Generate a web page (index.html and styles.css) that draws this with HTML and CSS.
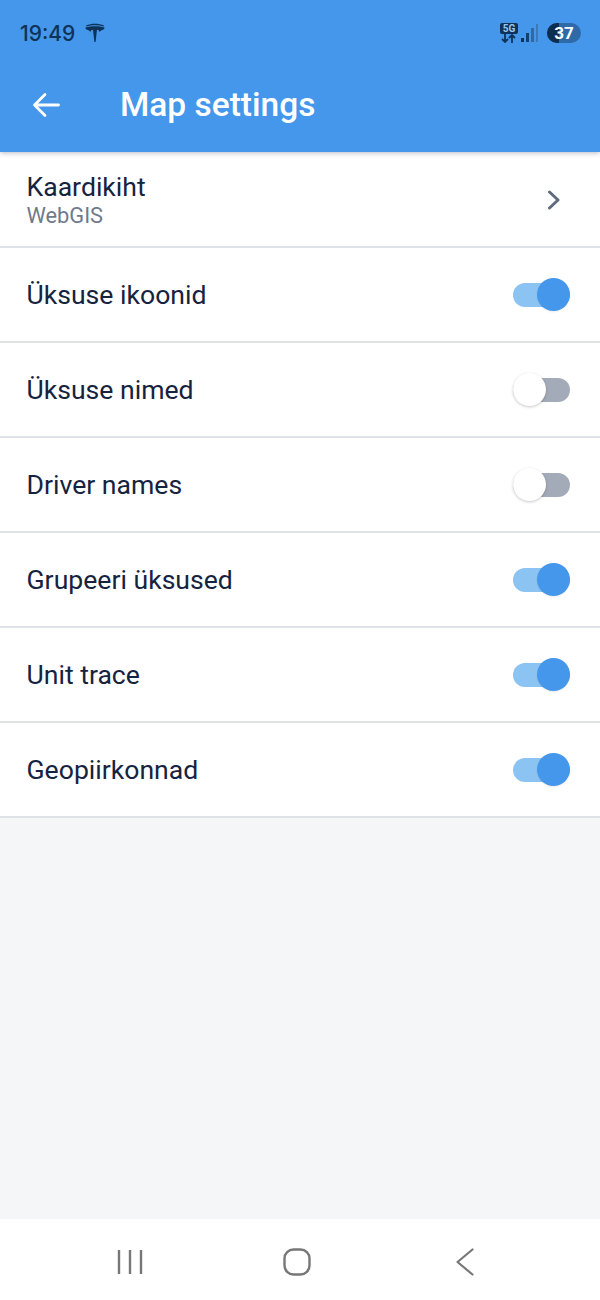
FILE: index.html
```html
<!DOCTYPE html>
<html lang="et">
<head>
<meta charset="utf-8">
<title>Map settings</title>
<link rel="stylesheet" href="styles.css">
</head>
<body>
<div class="screen">
  <header class="header">
    <div class="status">
      <div class="status-left">
        <span class="time">19:49</span>
        <svg class="tesla" viewBox="0 0 20 20" width="20" height="20"><path d="M1 2.4 C6.5 0.2 13.5 0.2 19 2.4 L18.6 3.4 C13.5 1.8 6.5 1.8 1.4 3.4 Z M0.6 4.6 C6 2.9 14 2.9 19.4 4.6 C19.6 5.3 19.4 5.8 19 6.2 C17.4 6.7 15.6 7.6 14.6 9 C14.2 7.4 13.4 6.9 12 6.7 L10.6 19 H9.4 L8 6.7 C6.6 6.9 5.8 7.4 5.4 9 C4.4 7.6 2.6 6.7 1 6.2 C0.6 5.8 0.4 5.3 0.6 4.6 Z" fill="#0f3358"/></svg>
      </div>
      <div class="status-right">
        <div class="net">
          <span class="net-badge">5G</span>
          <svg class="net-arrows" viewBox="0 0 18 9" width="18" height="9"><path d="M5 0 V8 M2 5 L5 8 L8 5 M12 9 V1 M9 4 L12 1 L15 4" fill="none" stroke="#0f3358" stroke-width="1.8"/></svg>
        </div>
        <svg class="signal" viewBox="0 0 18 20" width="18" height="20">
          <rect x="0" y="15" width="3" height="4" fill="#0f3358"/>
          <rect x="5" y="10" width="3" height="9" fill="#15416f"/>
          <rect x="10" y="5" width="3" height="14" fill="#2f6aa8"/>
          <rect x="15" y="1" width="2" height="18" fill="#3a78b8"/>
        </svg>
        <div class="battery"><span class="battery-level"></span><span class="battery-text">37</span></div>
      </div>
    </div>
    <div class="appbar">
      <svg class="back" viewBox="0 0 28 26" width="28" height="26"><path d="M26.5 13 H2.5 M13 2.5 L2.5 13 L13 23.5" fill="none" stroke="#fff" stroke-width="2.8" stroke-linecap="round" stroke-linejoin="round"/></svg>
      <h1 class="title">Map settings</h1>
    </div>
  </header>

  <main class="content">
    <ul class="list">
      <li class="row row-first">
        <div class="label-stack">
          <span class="label">Kaardikiht</span>
          <span class="sublabel">WebGIS</span>
        </div>
        <svg class="chevron" viewBox="0 0 14 20" width="14" height="20"><path d="M2.5 2 L11 10 L2.5 18" fill="none" stroke="#5f6b7e" stroke-width="3" stroke-linecap="round" stroke-linejoin="round"/></svg>
      </li>
      <li class="row"><span class="label">Üksuse ikoonid</span><span class="switch on"><span class="thumb"></span></span></li>
      <li class="row"><span class="label">Üksuse nimed</span><span class="switch"><span class="thumb"></span></span></li>
      <li class="row"><span class="label">Driver names</span><span class="switch"><span class="thumb"></span></span></li>
      <li class="row"><span class="label">Grupeeri üksused</span><span class="switch on"><span class="thumb"></span></span></li>
      <li class="row"><span class="label">Unit trace</span><span class="switch on"><span class="thumb"></span></span></li>
      <li class="row"><span class="label">Geopiirkonnad</span><span class="switch on"><span class="thumb"></span></span></li>
    </ul>
  </main>

  <nav class="navbar">
    <svg viewBox="0 0 26 26" width="26" height="26"><path d="M2 1 V25 M13 1 V25 M24 1 V25" fill="none" stroke="#777" stroke-width="2.4"/></svg>
    <svg viewBox="0 0 28 28" width="28" height="28"><rect x="1.5" y="1.5" width="25" height="25" rx="9" fill="none" stroke="#777" stroke-width="2.4"/></svg>
    <svg viewBox="0 0 18 28" width="18" height="28"><path d="M16.5 1.5 L1.5 14 L16.5 26.5" fill="none" stroke="#777" stroke-width="2.2" stroke-linecap="round" stroke-linejoin="round"/></svg>
  </nav>
</div>
</body>
</html>
```
FILE: styles.css
```css
* { box-sizing: border-box; }
html, body { margin: 0; padding: 0; }
body { font-family: Roboto, "Liberation Sans", sans-serif; background: #f5f6f8; }
.screen { width: 600px; height: 1300px; display: flex; flex-direction: column; overflow: hidden; }

.header { height: 152px; background: #4497ea; box-shadow: 0 1px 5px rgba(40, 60, 90, .35); position: relative; z-index: 1; flex: none; }
.status { height: 68px; display: flex; justify-content: space-between; align-items: flex-start; padding: 22px 19px 0 20px; }
.status-left { display: flex; align-items: center; gap: 10px; }
.time { font-family: Inter, Roboto, sans-serif; font-size: 21px; line-height: 24px; font-weight: 500; color: #0f3358; }
.tesla { margin-top: -2px; }
.status-right { display: flex; align-items: center; margin-top: 1px; }
.net { display: flex; flex-direction: column; align-items: center; width: 20px; margin-right: 2px; }
.net-badge { display: block; width: 18px; height: 11px; border-radius: 2px; background: #0f3358; color: #9cc6f0; font: 700 10px/11px Roboto, sans-serif; text-align: center; }
.net-arrows { display: block; margin-top: 0; }
.signal { margin-right: 8px; }
.battery { width: 34px; height: 20px; border-radius: 10px; background: #2f6aa8; position: relative; overflow: hidden; text-align: center; }
.battery-level { position: absolute; left: 0; top: 0; bottom: 0; width: 12px; background: #0f2d4f; }
.battery-text { position: relative; color: #fff; font: 700 17px/20px Roboto, sans-serif; }

.appbar { height: 84px; display: flex; align-items: center; padding: 0 0 10px 32px; }
.back { flex: none; }
.title { margin: 0 0 0 60px; font-size: 33.5px; line-height: 40px; font-weight: 500; color: #fff; }

.content { flex: 1; }
.list { list-style: none; margin: 0; padding: 0; background: #fff; }
.row { height: 95px; display: flex; align-items: center; justify-content: space-between; padding: 0 30px 0 26.5px; border-bottom: 2px solid #dfe2e6; }
.row-first { height: 96px; padding-top: 1px; }
.label-stack { display: flex; flex-direction: column; }
.label { font-size: 26.6px; line-height: 32px; color: #16233f; }
.sublabel { font-size: 21.8px; line-height: 25px; color: #6f7a8b; }
.chevron { margin-right: 9px; }

.switch { width: 57px; height: 24px; border-radius: 12px; background: #a4abb8; position: relative; display: block; }
.thumb { position: absolute; left: 0; top: -5px; width: 33px; height: 33px; border-radius: 50%; background: #fff; box-shadow: 0 1px 3px rgba(0, 0, 0, .22); }
.switch.on { background: #8bc3f2; }
.switch.on .thumb { left: auto; right: 0; background: #4497ea; box-shadow: 0 1px 2px rgba(0, 0, 0, .08); }

.navbar { height: 81px; flex: none; background: #fff; display: grid; grid-template-columns: repeat(3, 167.5px); align-items: center; justify-items: center; padding: 5px 0 0 46px; }
```
